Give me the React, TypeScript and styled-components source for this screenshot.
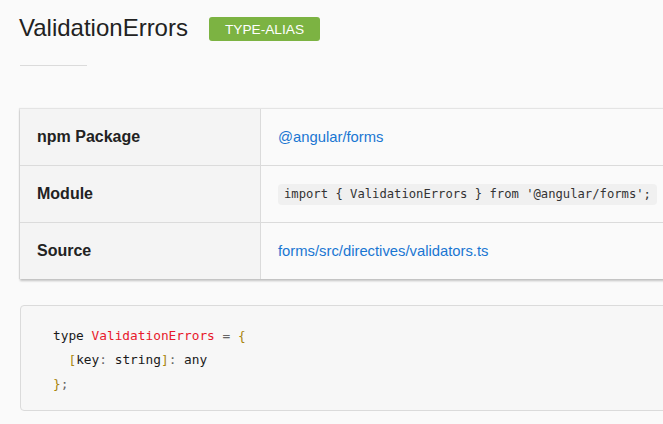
import React from "react";
import styled, { createGlobalStyle } from "styled-components";

const Global = createGlobalStyle`
  html, body { margin: 0; padding: 0; background: #fafafa; overflow: hidden; }
  body { font-family: "Liberation Sans", Arial, sans-serif; color: #222; }
`;

const Page = styled.main`
  padding: 0 0 0 20px;
  width: 740px;
  box-sizing: border-box;
`;

const TitleRow = styled.header`
  display: flex;
  align-items: center;
  gap: 21px;
  padding-top: 12px;
  height: 32px;
`;

const Title = styled.h1`
  margin: 0 0 0 -1px;
  font-size: 24px;
  font-weight: 400;
  line-height: 32px;
  color: #222;
`;

const Badge = styled.span`
  display: inline-flex;
  align-items: center;
  justify-content: center;
  height: 24px;
  width: 111px;
  box-sizing: border-box;
  border-radius: 3px;
  background: #7cb342;
  color: #fff;
  font-size: 13.7px;
  text-transform: uppercase;
  margin-top: 2px;
`;

const Rule = styled.hr`
  width: 67px;
  margin: 21px 0 0 0;
  border: 0;
  border-top: 1px solid #dbdbdb;
  height: 0;
`;

const Table = styled.div`
  margin-top: 42px;
  display: grid;
  grid-template-columns: 241px 1fr;
  border-top: 1px solid #e4e4e4;
  box-shadow: 0 2px 2px rgba(0, 0, 0, 0.22), -1px 0 1px rgba(0, 0, 0, 0.08);
  background: #fafafa;
`;

const Label = styled.div<{ $last?: boolean }>`
  height: 56px;
  display: flex;
  align-items: center;
  padding-left: 17px;
  background: #f4f4f4;
  border-right: 1px solid #dbdbdb;
  border-bottom: ${(p) => (p.$last ? "0" : "1px solid #dbdbdb")};
  font-size: 16px;
  font-weight: 700;
  color: #222;
`;

const Value = styled.div<{ $last?: boolean }>`
  height: 56px;
  display: flex;
  align-items: center;
  padding-left: 17px;
  border-bottom: ${(p) => (p.$last ? "0" : "1px solid #dbdbdb")};
  font-size: 14.8px;
`;

const Link = styled.a`
  color: #1976d2;
  text-decoration: none;
`;

const InlineCode = styled.code`
  font-family: "DejaVu Sans Mono", "Liberation Mono", monospace;
  font-size: 12.2px;
  line-height: 21px;
  height: 21px;
  padding: 0 6px;
  border-radius: 4px;
  background: #f0f0f0;
  color: #333;
  white-space: pre;
`;

const CodeBlock = styled.pre`
  margin: 26px 0 0 0;
  padding: 18px 32px 14px;
  border: 1px solid #dbdbdb;
  border-radius: 4px;
  background: #f7f7f7;
  font-family: "DejaVu Sans Mono", "Liberation Mono", monospace;
  font-size: 12.8px;
  line-height: 24px;
  color: #1a1a1a;
`;

const Tok = styled.span<{ $kind: "kwd" | "typ" | "pun" | "opn" | "pln" }>`
  color: ${(p) =>
    p.$kind === "typ"
      ? "#e8192c"
      : p.$kind === "opn"
      ? "#a8850e"
      : p.$kind === "pun"
      ? "#666"
      : "#1a1a1a"};
`;

export default function App() {
  return (
    <>
      <Global />
      <Page>
        <TitleRow>
          <Title>ValidationErrors</Title>
          <Badge>type-alias</Badge>
        </TitleRow>
        <Rule />
        <Table>
          <Label>npm Package</Label>
          <Value>
            <Link href="#">@angular/forms</Link>
          </Value>
          <Label>Module</Label>
          <Value>
            <InlineCode>import {"{"} ValidationErrors {"}"} from '@angular/forms';</InlineCode>
          </Value>
          <Label $last>Source</Label>
          <Value $last>
            <Link href="#">forms/src/directives/validators.ts</Link>
          </Value>
        </Table>
        <CodeBlock>
          <Tok $kind="kwd">type</Tok> <Tok $kind="typ">ValidationErrors</Tok>{" "}
          <Tok $kind="pun">=</Tok> <Tok $kind="opn">{"{"}</Tok>
          {"\n  "}
          <Tok $kind="opn">[</Tok>
          <Tok $kind="pln">key</Tok>
          <Tok $kind="pun">:</Tok> <Tok $kind="pln">string</Tok>
          <Tok $kind="opn">]</Tok>
          <Tok $kind="pun">:</Tok> <Tok $kind="pln">any</Tok>
          {"\n"}
          <Tok $kind="opn">{"}"}</Tok>
          <Tok $kind="pun">;</Tok>
        </CodeBlock>
      </Page>
    </>
  );
}
